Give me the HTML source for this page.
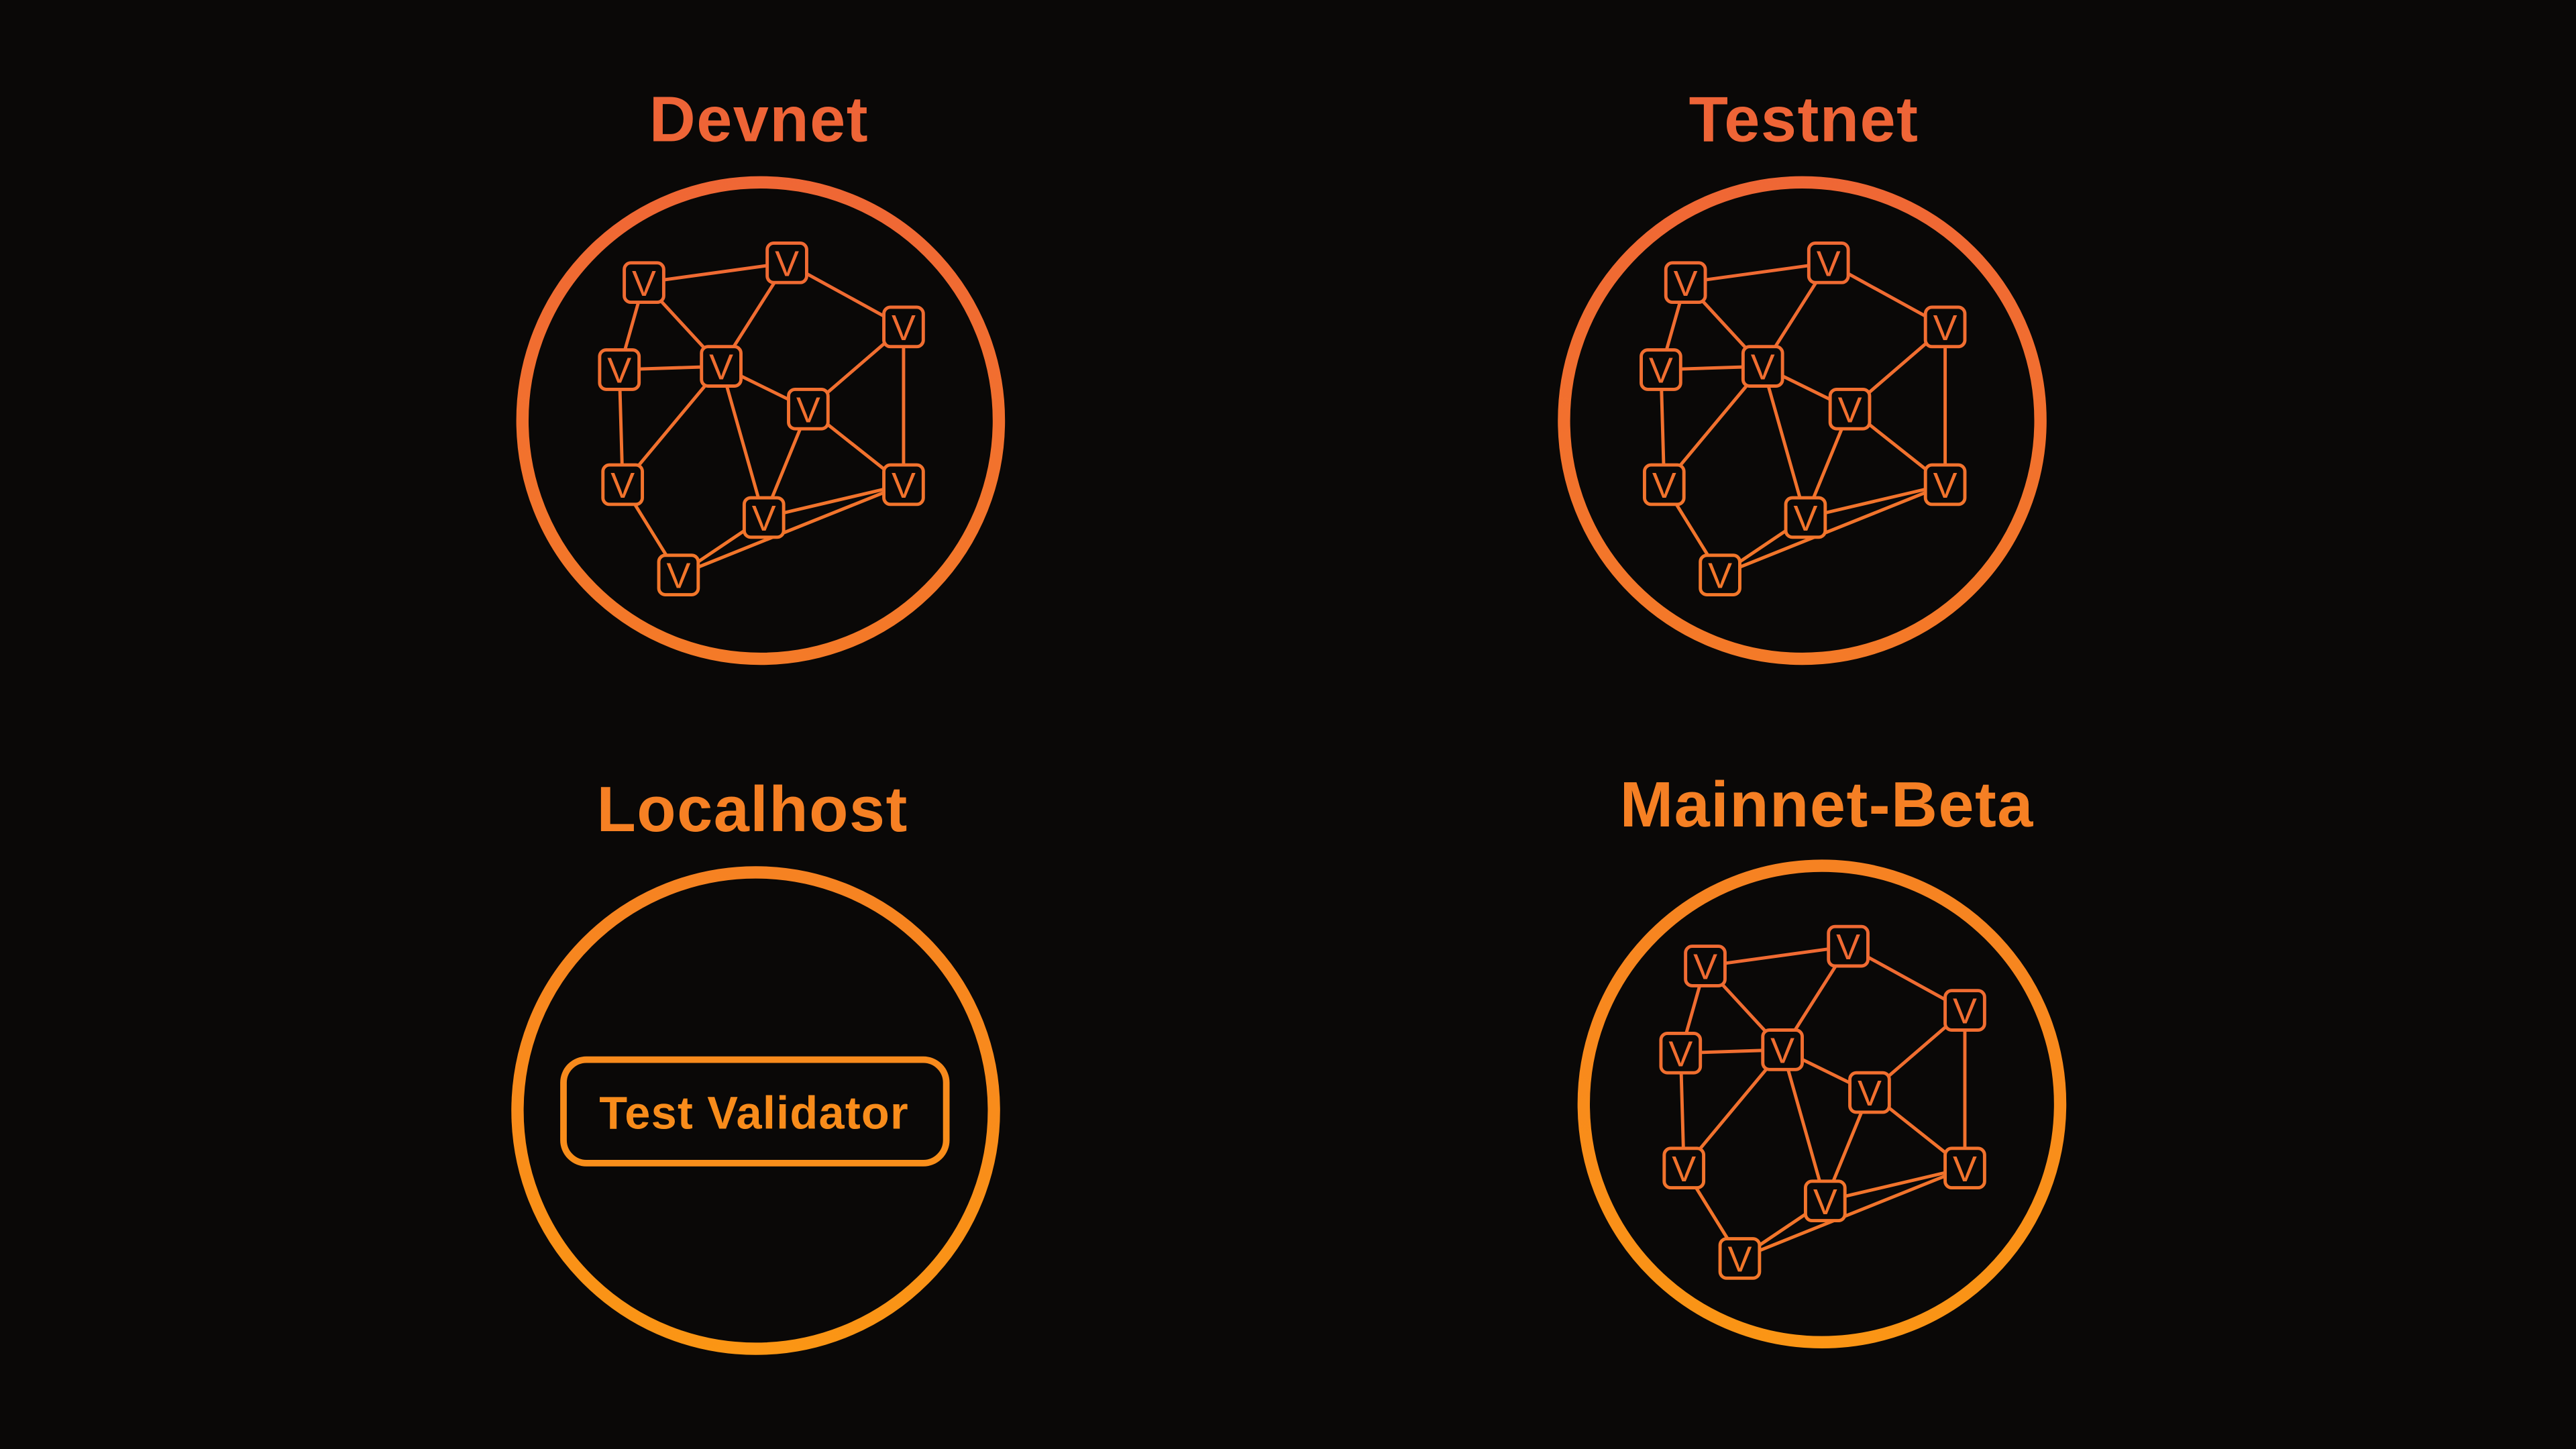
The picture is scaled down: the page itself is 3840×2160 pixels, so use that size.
<!DOCTYPE html>
<html><head><meta charset="utf-8"><style>
html,body{margin:0;padding:0;background:#0a0807;}
svg{display:block}
text{font-family:"Liberation Sans",sans-serif;font-weight:bold;}
text.v{font-weight:normal}
</style></head><body>
<svg width="3840" height="2160" viewBox="0 0 1568 882" xmlns="http://www.w3.org/2000/svg">
<defs>
<linearGradient id="g" gradientUnits="userSpaceOnUse" x1="0" y1="40" x2="0" y2="830">
<stop offset="0" stop-color="#ee6238"/><stop offset="1" stop-color="#fb9614"/>
</linearGradient>
</defs>
<rect width="1568" height="882" fill="#0a0807"/>
<g fill="url(#g)" text-anchor="middle" font-size="39" letter-spacing="0.6">
<text x="462" y="86">Devnet</text>
<text x="1098" y="86">Testnet</text>
<text x="458" y="506">Localhost</text>
<text x="1112" y="503">Mainnet-Beta</text>
</g>
<g fill="none" stroke="url(#g)" stroke-width="7.5">
<circle cx="463" cy="256" r="145"/>
<circle cx="1097" cy="256" r="145"/>
<circle cx="460" cy="676" r="145"/>
<circle cx="1109" cy="672" r="145"/>
</g>
<rect x="343" y="645" width="233" height="63" rx="14" fill="none" stroke="url(#g)" stroke-width="4"/>
<text x="459" y="687" text-anchor="middle" font-size="28" letter-spacing="0.5" fill="url(#g)">Test Validator</text>

<g stroke="url(#g)" stroke-width="2" fill="none">
<g><path d="M392,172L479,160L550,199M392,172L377,225M392,172L439,223M479,160L439,223M377,225L439,223L492,249L550,199L550,295M377,225L379,295M439,223L379,295M439,223L465,315M492,249L465,315M492,249L550,295L465,315M379,295L413,350L465,315M413,350L550,295"/></g>
<g transform="translate(634,0)"><path d="M392,172L479,160L550,199M392,172L377,225M392,172L439,223M479,160L439,223M377,225L439,223L492,249L550,199L550,295M377,225L379,295M439,223L379,295M439,223L465,315M492,249L465,315M492,249L550,295L465,315M379,295L413,350L465,315M413,350L550,295"/></g>
<g transform="translate(646,416)"><path d="M392,172L479,160L550,199M392,172L377,225M392,172L439,223M479,160L439,223M377,225L439,223L492,249L550,199L550,295M377,225L379,295M439,223L379,295M439,223L465,315M492,249L465,315M492,249L550,295L465,315M379,295L413,350L465,315M413,350L550,295"/></g>
</g>

<g stroke="url(#g)" stroke-width="2" fill="#0a0807">
<g>
<rect x="380" y="160" width="24" height="24" rx="4"/><rect x="467" y="148" width="24" height="24" rx="4"/><rect x="538" y="187" width="24" height="24" rx="4"/><rect x="365" y="213" width="24" height="24" rx="4"/><rect x="427" y="211" width="24" height="24" rx="4"/><rect x="480" y="237" width="24" height="24" rx="4"/><rect x="367" y="283" width="24" height="24" rx="4"/><rect x="453" y="303" width="24" height="24" rx="4"/><rect x="538" y="283" width="24" height="24" rx="4"/><rect x="401" y="338" width="24" height="24" rx="4"/>
</g>
<g transform="translate(634,0)">
<rect x="380" y="160" width="24" height="24" rx="4"/><rect x="467" y="148" width="24" height="24" rx="4"/><rect x="538" y="187" width="24" height="24" rx="4"/><rect x="365" y="213" width="24" height="24" rx="4"/><rect x="427" y="211" width="24" height="24" rx="4"/><rect x="480" y="237" width="24" height="24" rx="4"/><rect x="367" y="283" width="24" height="24" rx="4"/><rect x="453" y="303" width="24" height="24" rx="4"/><rect x="538" y="283" width="24" height="24" rx="4"/><rect x="401" y="338" width="24" height="24" rx="4"/>
</g>
<g transform="translate(646,416)">
<rect x="380" y="160" width="24" height="24" rx="4"/><rect x="467" y="148" width="24" height="24" rx="4"/><rect x="538" y="187" width="24" height="24" rx="4"/><rect x="365" y="213" width="24" height="24" rx="4"/><rect x="427" y="211" width="24" height="24" rx="4"/><rect x="480" y="237" width="24" height="24" rx="4"/><rect x="367" y="283" width="24" height="24" rx="4"/><rect x="453" y="303" width="24" height="24" rx="4"/><rect x="538" y="283" width="24" height="24" rx="4"/><rect x="401" y="338" width="24" height="24" rx="4"/>
</g>
</g>

<g fill="url(#g)" text-anchor="middle" font-size="22">
<g>
<text class="v" x="392" y="180">V</text><text class="v" x="479" y="168">V</text><text class="v" x="550" y="207">V</text><text class="v" x="377" y="233">V</text><text class="v" x="439" y="231">V</text><text class="v" x="492" y="257">V</text><text class="v" x="379" y="303">V</text><text class="v" x="465" y="323">V</text><text class="v" x="550" y="303">V</text><text class="v" x="413" y="358">V</text>
</g>
<g transform="translate(634,0)">
<text class="v" x="392" y="180">V</text><text class="v" x="479" y="168">V</text><text class="v" x="550" y="207">V</text><text class="v" x="377" y="233">V</text><text class="v" x="439" y="231">V</text><text class="v" x="492" y="257">V</text><text class="v" x="379" y="303">V</text><text class="v" x="465" y="323">V</text><text class="v" x="550" y="303">V</text><text class="v" x="413" y="358">V</text>
</g>
<g transform="translate(646,416)">
<text class="v" x="392" y="180">V</text><text class="v" x="479" y="168">V</text><text class="v" x="550" y="207">V</text><text class="v" x="377" y="233">V</text><text class="v" x="439" y="231">V</text><text class="v" x="492" y="257">V</text><text class="v" x="379" y="303">V</text><text class="v" x="465" y="323">V</text><text class="v" x="550" y="303">V</text><text class="v" x="413" y="358">V</text>
</g>
</g>
</svg>
</body></html>
